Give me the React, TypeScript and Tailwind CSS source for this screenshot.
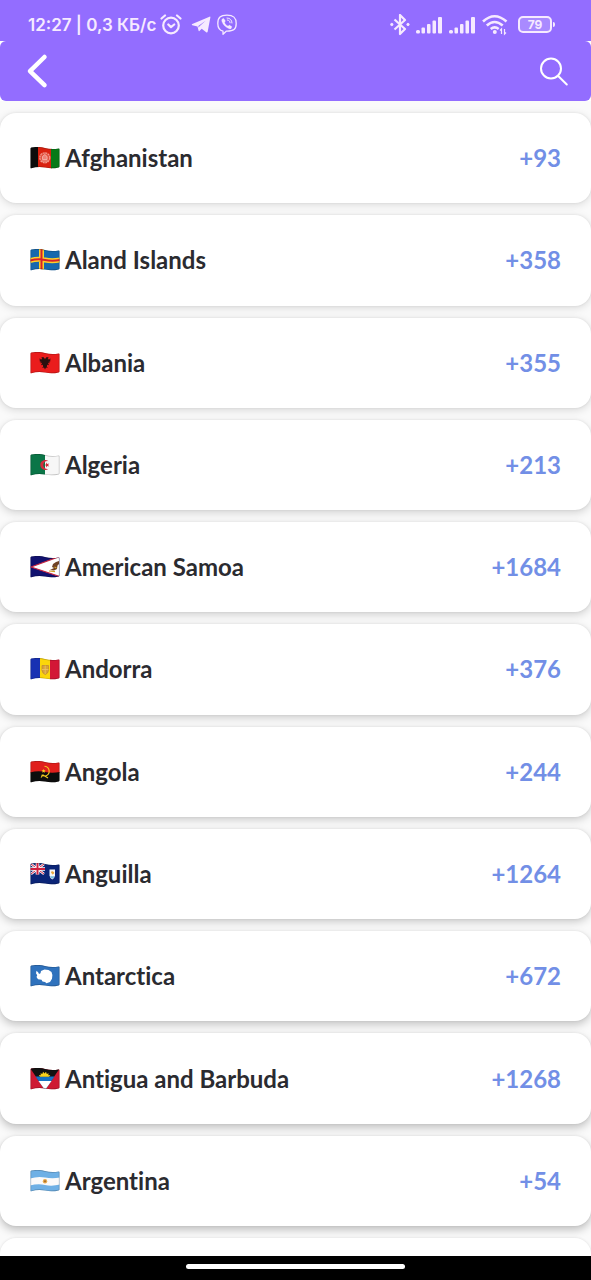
import type { ReactNode } from 'react';

interface Country {
  name: string;
  dialCode: string;
  flag: ReactNode;
}

/* Flags are drawn in a 30x22 box and clipped to the waving shape */
const countries: Country[] = [
  {
    name: 'Afghanistan',
    dialCode: '+93',
    flag: (
      <>
        <rect width="8.5" height="22" fill="#0c0c0c" />
        <rect x="8" width="14" height="22" fill="#d9200f" />
        <rect x="21" width="9" height="22" fill="#067a17" />
        <circle cx="14.8" cy="10.8" r="5" fill="#e2503f" stroke="#f3988b" strokeWidth="1.3" strokeDasharray="2 .6" />
        <path d="M11.5 14h6.5M12.5 12.500V9.5l2.3-2 2.3 2v3z" fill="#ee8176" stroke="#f8c5bd" strokeWidth=".7" />
      </>
    ),
  },
  {
    name: 'Aland Islands',
    dialCode: '+358',
    flag: (
      <>
        <rect width="30" height="22" fill="#1768ad" />
        <path d="M11.5 0v22M0 11.5Q8 9.5 15 11t15 0" stroke="#ffcf27" strokeWidth="5" fill="none" />
        <path d="M11.5 0v22M0 11.5Q8 9.5 15 11t15 0" stroke="#d6212b" strokeWidth="2" fill="none" />
      </>
    ),
  },
  {
    name: 'Albania',
    dialCode: '+355',
    flag: (
      <>
        <rect width="30" height="22" fill="#ea1c1c" />
        <path
          d="M15 7l-1.7-2-2 .5 1 1.5-1.5.5-1.2-1.2.2 3.2 2 .5-2.2 1 2.6.2-1.4 2 2-.5.4 1.8-1 1.5 1.8-.5 1 2 1-2 1.8.5-1-1.5.4-1.8 2 .5-1.4-2 2.6-.2-2.2-1 2-.5.2-3.2-1.2 1.2-1.5-.5 1-1.5-2-.5z"
          fill="#29100f"
        />
      </>
    ),
  },
  {
    name: 'Algeria',
    dialCode: '+213',
    flag: (
      <>
        <rect width="15" height="22" fill="#0a7547" />
        <rect x="15" width="15" height="22" fill="#f7f7f7" />
        <path d="M18.5 7.2a5 5 0 1 0 0 7.6 4 4 0 1 1 0-7.6z" fill="#d52b3c" />
        <path d="M14 11l2-.6.1-2 1.2 1.6 2-.6-1.2 1.6 1.2 1.6-2-.6-1.2 1.6-.1-2z" fill="#d52b3c" />
      </>
    ),
  },
  {
    name: 'American Samoa',
    dialCode: '+1684',
    flag: (
      <>
        <rect width="30" height="22" fill="#11116f" />
        <path d="M31 0L1 11l30 10z" fill="#fff" stroke="#c62642" strokeWidth="1.3" />
        <path d="M29 5l-3 1-3 2-1 3 2 1-4 2 4 .5 3-1.5.5-3.5L29 8z" fill="#704326" />
        <path d="M19 15l6 .6M24.5 11l2 1" stroke="#d6a426" strokeWidth="1.2" />
      </>
    ),
  },
  {
    name: 'Andorra',
    dialCode: '+376',
    flag: (
      <>
        <rect width="10" height="22" fill="#1831b3" />
        <rect x="10" width="11" height="22" fill="#fbd60a" />
        <rect x="20" width="10" height="22" fill="#d31736" />
        <path d="M12 7.5h6.5v5q-.5 3-3.2 4-2.8-1-3.3-4z" fill="#d9a13a" stroke="#c08c30" strokeWidth=".8" />
        <path d="M15.2 7.5v8.5M12 11.5h6.5" stroke="#eec464" strokeWidth=".8" />
      </>
    ),
  },
  {
    name: 'Angola',
    dialCode: '+244',
    flag: (
      <>
        <rect width="30" height="12" fill="#e01f1c" />
        <path d="M0 11.5Q8 9.5 15 11t15 0V22H0z" fill="#0d0d0d" />
        <path d="M14.5 5.2a5 5 0 0 1 1 9.8q-2 .3-4-1M11 16.5l2-2.5 5 3" fill="none" stroke="#f5cd1f" strokeWidth="1.1" />
        <path d="M13.6 8l.6 1.2 1.4.1-1 1 .3 1.4-1.3-.7-1.2.7.2-1.4-1-1 1.4-.1z" fill="#f5cd1f" />
      </>
    ),
  },
  {
    name: 'Anguilla',
    dialCode: '+1264',
    flag: (
      <>
        <rect width="30" height="22" fill="#0b2577" />
        <path d="M1 1l13 10M14 1L1 11" stroke="#fff" strokeWidth="2.4" />
        <path d="M1 1l13 10M14 1L1 11" stroke="#d02140" strokeWidth="1" />
        <path d="M7.5 0v11.5M0 6h15" stroke="#fff" strokeWidth="3.6" />
        <path d="M7.5 0v11.5M0 6h15" stroke="#d02140" strokeWidth="2" />
        <path d="M19.500 6.500h5.500v6q-.5 3-2.700 4-2.300-1-2.800-4z" fill="#f4f7fa" />
        <path d="M20 13.200h4.500q-.5 1.800-2.200 2.500-1.700-.7-2.300-2.500z" fill="#72bde0" />
        <path d="M20.800 9q1.500-1.400 3 0t-1.500 2.600z" fill="#eaa83e" />
      </>
    ),
  },
  {
    name: 'Antarctica',
    dialCode: '+672',
    flag: (
      <>
        <rect width="30" height="22" fill="#2f72bd" />
        <path
          d="M6.500 5.800l1.800 1.700.7 1.500 1.500-.8.500-2.200 3.500-1.500 4 .6 3 2 .9 3-.4 3.700-2 3.200-3.500 1.200-1.500-1.200-2.500-.5-1-1.800-3.500-.5-1.500-2.200.700-1.800-1.200-1.900z"
          fill="#fff"
        />
      </>
    ),
  },
  {
    name: 'Antigua and Barbuda',
    dialCode: '+1268',
    flag: (
      <>
        <rect width="30" height="22" fill="#ce1a33" />
        <path d="M0 0h30L15 22z" fill="#111" />
        <path d="M5.500 8.500h19L15 22z" fill="#1573c4" />
        <path d="M8.500 13h13L15 22z" fill="#fff" />
        <path
          d="M10 8.800l-1.200-1.700 2 .1-.3-2 1.800.8.8-2.200 1.400 1.700L16 3.800l.8 2.200 1.800-.8-.3 2 2-.1-1.200 1.700z"
          fill="#f9d31c"
        />
      </>
    ),
  },
  {
    name: 'Argentina',
    dialCode: '+54',
    flag: (
      <>
        <rect width="30" height="22" fill="#6eb0e5" />
        <path d="M0 8.500Q8 6 15 7.500t15 0v7q-8 2-15 .5T0 15.500z" fill="#fafafa" />
        <circle cx="15" cy="11.200" r="2.200" fill="#e6a94b" />
        <circle cx="15" cy="11.200" r="1" fill="#a56b2a" />
      </>
    ),
  },
];

const flagOutline =
  'M.5 1.500Q.5.900 1.300.600 8-.9 15 1t13.700.4q.8 0 .8.700v17.400q0 .7-.8.900Q22 22 15 20.600T1.300 21.300Q.5 21.500.5 20.700z';

function Flag({ id, children }: { id: string; children: ReactNode }) {
  return (
    <svg viewBox="0 0 30 22" className="h-[22px] w-[30px] shrink-0" aria-hidden="true">
      <clipPath id={id}>
        <path d={flagOutline} />
      </clipPath>
      <g clipPath={`url(#${id})`}>
        {children}
        <path d={flagOutline} fill="none" stroke="#000" strokeOpacity=".22" strokeWidth="1.400" />
      </g>
    </svg>
  );
}

function SignalBars() {
  return (
    <svg viewBox="0 0 27 18" className="h-[18px] w-[27px]" fill="currentColor" aria-hidden="true">
      <rect x="0" y="14" width="4" height="3.500" rx="1.500" />
      <rect x="5.500" y="11.500" width="3.500" height="6" rx="1" />
      <rect x="11" y="8" width="3.500" height="9.500" rx="1" />
      <rect x="16.500" y="4.500" width="3.500" height="13" rx="1" />
      <rect x="22" y="1" width="4" height="16.500" rx="1" />
    </svg>
  );
}

function StatusBar() {
  return (
    <div className="flex h-[41px] items-center justify-between bg-[#936dff] pt-2 pr-9 pl-7 text-[#f6eaff]">
      <div className="flex items-center gap-1">
        <span className="font-['Inter',sans-serif] text-[17px] leading-6 font-semibold whitespace-nowrap">12:27 | 0,3 КБ/с</span>
        <svg viewBox="0 0 22 22" className="size-[22px]" fill="none" stroke="currentColor" strokeWidth="2.200" strokeLinecap="round" strokeLinejoin="round" aria-label="Alarm">
          <circle cx="11" cy="11.500" r="7.800" />
          <path d="M1.500 4.500L5 1.500M20.500 4.500L17 1.500M8.300 10.500l2.700 2.600 3.200-2.600" />
        </svg>
        <svg viewBox="0 0 22 22" className="ml-1 size-[22px]" fill="currentColor" aria-label="Telegram">
          <path d="M19.500 2.700q1-.4.900.6L17.700 17.500q-.3 1.500-1.500.8l-4.500-3.500-2.300 2.200q-.6.500-.8-.3l-1.100-4.200-5.200-1.300q-1.300-.5 0-1.100zM15.600 6.700l-7.300 5.300.6 1.700.4-1.200z" fillRule="evenodd" />
        </svg>
        <svg viewBox="0 0 22 22" className="size-[22px]" fill="none" stroke="currentColor" strokeWidth="1.300" strokeLinecap="round" strokeLinejoin="round" aria-label="Viber">
          <path d="M7 17.200C3 16.200 1.800 13.500 1.800 9.500c0-6 2.700-8.300 9.200-8.300s9.200 2.300 9.200 8.300-2.700 7.700-9.200 7.700h-.8L7 20.200z" />
          <path d="M6.300 5.100l1.300-.8 1.900 2.600-.9 1.300c.4 1.800 1.700 3.200 3.500 3.800l1.300-1 2.600 1.800-.8 1.600c-.8.800-1.700.6-2.600.2C9.500 13.200 7.100 10.900 6 7.800c-.4-1.100-.5-2 .3-2.700z" fill="currentColor" strokeWidth=".2" />
          <path d="M11 4c3 0 5 2 5 5M11.300 6c1.700.1 2.700 1.100 2.800 2.800" strokeWidth="1" />
        </svg>
      </div>
      <div className="flex items-center gap-[6px]">
        <svg viewBox="0 0 20 22" className="h-[22px] w-5" fill="none" stroke="currentColor" strokeWidth="2.200" strokeLinejoin="round" aria-label="Bluetooth">
          <path d="M4.500 5.500l10.500 9.500-5 5V1l5 5L4.500 15.500" />
          <circle cx="1.800" cy="10.500" r="1.200" fill="currentColor" strokeWidth=".8" />
          <circle cx="18" cy="10.500" r="1.200" fill="currentColor" strokeWidth=".8" />
        </svg>
        <SignalBars />
        <SignalBars />
        <svg viewBox="0 0 26 22" className="h-[22px] w-[26px]" fill="none" stroke="currentColor" strokeWidth="2.600" aria-label="Wi-Fi">
          <path d="M1 7.500Q12.500-3 24.500 7.500M4.800 11.500q7.700-7 15.900 0M8.700 15q4-3.200 8 0" />
          <circle cx="12.800" cy="18" r="2" fill="currentColor" stroke="none" />
          <path d="M19.500 20v-5l-1.500 1.500M22.500 15v5l1.500-1.500" strokeWidth="1.200" />
        </svg>
        <div className="ml-1 flex items-center gap-px">
          <div className="flex h-[17px] w-[34px] items-center justify-center rounded-[5px] border-2 border-current bg-[#a98aff] font-['Inter',sans-serif] text-[12px] leading-none font-bold">
            79
          </div>
          <div className="h-[5px] w-[2px] rounded-r-sm bg-current" />
        </div>
      </div>
    </div>
  );
}

function TopBar() {
  return (
    <header className="flex h-[60px] items-center justify-between rounded-md bg-[#936dff] pr-[22px] pl-6 text-white">
      <button type="button" aria-label="Back" className="flex items-center">
        <svg viewBox="0 0 26 36" className="h-9 w-[26px]" fill="none" stroke="currentColor" strokeWidth="4.500" strokeLinecap="round" strokeLinejoin="round">
          <path d="M20.500 4L6 18.200l14.500 14" />
        </svg>
      </button>
      <button type="button" aria-label="Search" className="flex items-center">
        <svg viewBox="0 0 30 30" className="size-[30px]" fill="none" stroke="currentColor" strokeWidth="2" strokeLinecap="round">
          <circle cx="12" cy="12.500" r="10" />
          <path d="M19.200 20l8.600 8.500" />
        </svg>
      </button>
    </header>
  );
}

function CountryCard({ country, index }: { country: Country; index: number }) {
  // shadows get heavier further down the list
  const alpha = 0.12 + index * 0.011;
  const offset = 2 + Math.round(index / 5);

  return (
    <li
      className="flex min-h-20 flex-1 rounded-2xl bg-white"
      style={{ boxShadow: `0 ${offset}px 8px rgba(0, 0, 0, ${alpha}), 0 0 3px rgba(0, 0, 0, 0.08)` }}
    >
      <button type="button" className="flex flex-1 items-center justify-between px-[30px] text-2xl font-bold">
        <span className="flex items-center gap-[5px] text-[#2b2b30] [font-variant-ligatures:none]">
          <Flag id={`flag-${index}`}>{country.flag}</Flag>
          {country.name}
        </span>
        <span className="text-[#728fe6]">{country.dialCode}</span>
      </button>
    </li>
  );
}

export default function App() {
  return (
    <div className="flex h-screen flex-col bg-white font-['Lato',sans-serif]">
      <StatusBar />
      <TopBar />
      <main className="flex flex-1 flex-col overflow-hidden">
        <ul className="flex flex-1 flex-col gap-3 bg-[#fafafa] pt-3">
          {countries.map((country, index) => (
            <CountryCard key={country.name} country={country} index={index} />
          ))}
          <li className="h-[18px] rounded-t-2xl bg-white shadow-[0_0_3px_rgba(0,0,0,0.12)]" />
        </ul>
      </main>
      <div className="flex h-6 justify-center bg-black pt-2">
        <div className="h-[5px] w-[37%] rounded-full bg-white" />
      </div>
    </div>
  );
}
